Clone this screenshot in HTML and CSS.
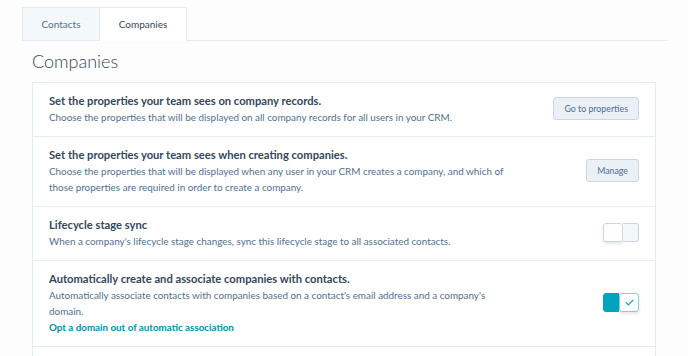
FILE: index.html
```html
<!DOCTYPE html>
<html>
<head>
  <meta charset="UTF-8">
  <title>Object settings</title>
  <link rel="stylesheet" href="styles.css">
</head>
<body>
  <div class="tabs">
    <div class="tab">Contacts</div>
    <div class="tab active">Companies</div>
  </div>

  <div class="content">
    <h1>Companies</h1>

    <div class="card">
      <div class="row">
        <div class="text">
          <h3>Set the properties your team sees on company records.</h3>
          <p>Choose the properties that will be displayed on all company records for all users in your CRM.</p>
        </div>
        <button class="button">Go to properties</button>
      </div>

      <div class="row">
        <div class="text">
          <h3>Set the properties your team sees when creating companies.</h3>
          <p>Choose the properties that will be displayed when any user in your CRM creates a company, and which of those properties are required in order to create a company.</p>
        </div>
        <button class="button">Manage</button>
      </div>

      <div class="row">
        <div class="text">
          <h3>Lifecycle stage sync</h3>
          <p>When a company's lifecycle stage changes, sync this lifecycle stage to all associated contacts.</p>
        </div>
        <span class="toggle">
          <span class="knob"></span>
          <span class="track"></span>
        </span>
      </div>

      <div class="row">
        <div class="text">
          <h3>Automatically create and associate companies with contacts.</h3>
          <p>Automatically associate contacts with companies based on a contact's email address and a company's domain.</p>
          <a href="#" class="link">Opt a domain out of automatic association</a>
        </div>
        <span class="toggle on">
          <span class="track"></span>
          <span class="knob">
            <svg width="9" height="7" viewBox="0 0 9 7"><path d="M1 3.6 L3.4 5.8 L8 1.2" fill="none" stroke="#00a4bd" stroke-width="1.2" stroke-linecap="round" stroke-linejoin="round"/></svg>
          </span>
        </span>
      </div>

      <div class="row last"></div>
    </div>
  </div>
</body>
</html>
```

FILE: styles.css
```css
body {
  margin: 0;
  background-color: #fdfdfd;
  font-family: Lato, "Open Sans", sans-serif;
  color: #33475b;
}
.tabs {
  display: flex;
  margin: 7px 20px 0 22px;
  border-bottom: 1px solid #e5ebf2;
}
.tab {
  width: 76px;
  height: 32px;
  line-height: 32px;
  text-align: center;
  font-size: 10px;
  color: #516f90;
  background-color: #f5f8fa;
  border: 1px solid #e5ebf2;
  border-bottom: none;
  border-right: none;
  margin-bottom: -1px;
}
.tab.active {
  width: 86px;
  height: 33px;
  color: #33475b;
  background-color: #fff;
  border-right: 1px solid #e5ebf2;
}
.content {
  padding: 0 32px;
}
h1 {
  font-size: 18px;
  font-weight: 300;
  margin: 8px 0 9px 0;
  line-height: 24px;
  color: #33475b;
}
.card {
  background: #fff;
  border: 1px solid #e5ebf2;
}
.row {
  display: flex;
  align-items: center;
  justify-content: space-between;
  padding: 9px 16px 11px 16px;
  border-bottom: 1px solid #e5ebf2;
}
.row.last {
  border-bottom: none;
  height: 20px;
}
.text {
  max-width: 460px;
}
h3 {
  font-size: 11.2px;
  font-weight: 700;
  margin: 0;
  line-height: 17px;
}
p {
  font-size: 9.9px;
  margin: 0;
  line-height: 16px;
  color: #516f90;
}
.link {
  display: block;
  font-size: 9.8px;
  font-weight: 700;
  line-height: 16px;
  color: #0091ae;
  text-decoration: none;
}
.button {
  font-family: inherit;
  font-size: 8.8px;
  color: #506e91;
  background-color: #eaf0f6;
  border: 1px solid #cbd6e2;
  border-radius: 3px;
  padding: 0 10px;
  height: 23px;
  cursor: pointer;
}
.toggle {
  display: flex;
  width: 36px;
  height: 19px;
}
.toggle .track {
  flex: 1;
  background-color: #f5f8fa;
  border: 1px solid #cbd6e2;
  border-left: none;
  border-radius: 0 3px 3px 0;
}
.toggle .knob {
  width: 18px;
  display: flex;
  align-items: center;
  justify-content: center;
  background: #fff;
  border: 1px solid #cbd6e2;
  border-radius: 3px;
  box-shadow: 0 2px 3px rgba(45,62,80,0.12);
}
.toggle.on .track {
  background-color: #00a4bd;
  border: 1px solid #00a4bd;
  border-radius: 3px 0 0 3px;
}
.toggle.on .knob {
  border-color: #7fd1de;
}
```
